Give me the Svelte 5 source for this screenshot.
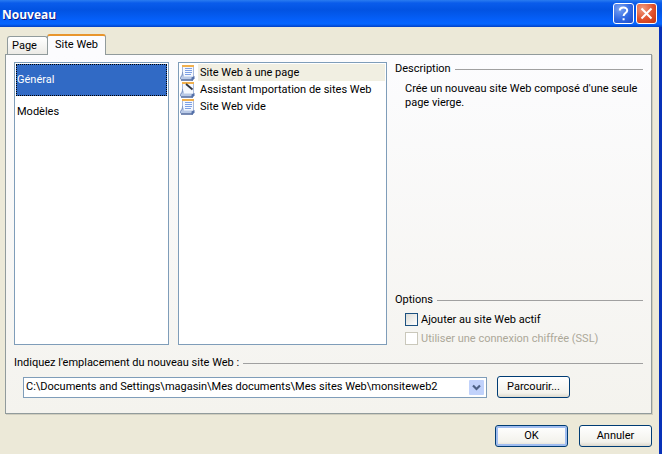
<script>
  const categories = ['Général', 'Modèles'];
  const templates = [
    { name: 'Site Web à une page', icon: 'page' },
    { name: 'Assistant Importation de sites Web', icon: 'wizard' },
    { name: 'Site Web vide', icon: 'page' }
  ];
  const paths = ['C:\\Documents and Settings\\magasin\\Mes documents\\Mes sites Web\\monsiteweb2'];

  let category = $state('Général');
  let template = $state('Site Web à une page');
  let path = $state(paths[0]);
  let addToActive = $state(false);
</script>

<div class="window">
  <header>
    <h1>Nouveau</h1>
    <button type="button" class="caption help" aria-label="Aide">
      <svg viewBox="0 0 21 21" width="21" height="21">
        <path d="M6.8 7.6C6.8 3.6 14.2 3.6 14.2 7.4C14.2 10 10.6 10 10.6 13" />
        <path d="M10.6 15.2v2" />
      </svg>
    </button>
    <button type="button" class="caption close" aria-label="Fermer">
      <svg viewBox="0 0 21 21" width="21" height="21">
        <path d="M5.5 5.5l10 10M15.5 5.5l-10 10" />
      </svg>
    </button>
  </header>

  <main>
    <div class="tabs" role="tablist">
      <button type="button" role="tab" aria-selected="false">Page</button>
      <button type="button" role="tab" aria-selected="true" class="active">Site Web</button>
    </div>

    <section class="panel">
      <div class="columns">
        <div class="list categories" role="listbox" aria-label="Catégories">
          {#each categories as item}
            <button
              type="button"
              role="option"
              aria-selected={category === item}
              class:selected={category === item}
              onclick={() => (category = item)}
            >{item}</button>
          {/each}
        </div>

        <div class="list templates" role="listbox" aria-label="Sites Web">
          {#each templates as item}
            <button
              type="button"
              role="option"
              aria-selected={template === item.name}
              class:selected={template === item.name}
              onclick={() => (template = item.name)}
            >
              <svg viewBox="0 0 16 16" width="16" height="16" aria-hidden="true">
                <path d="M2.5 .5h11v12h-11z" fill="#f4f8ff" stroke="#a9b9da" />
                <path d="M2 1h12" stroke="#f0b04e" stroke-width="2" />
                <path d="M2.5 7L4 10v1.500h8l2 .5v2L12.500 15.500h-11L0 14v-1.500z" fill="#b9c9e6" />
                <path d="M2.500 7v3L.5 12.500v1.500" stroke="#8298c4" />
                <path d="M1 15h12" stroke="#5a6f9f" stroke-width="1.500" />
                <path d="M11.500 12.500l3-1.500v2.500l-2 2h-1z" fill="#536fa8" />
                {#if item.icon === 'page'}
                  <path d="M5 3.5h7M5 5.5h7M5 7.5h7M5 9.5h6" stroke="#7ea0e4" />
                {:else}
                  <path d="M6 2L12.500 7.500" stroke="#303541" stroke-width="1.800" />
                {/if}
              </svg>
              <span>{item.name}</span>
            </button>
          {/each}
        </div>

        <div class="details">
          <section>
            <h2>Description</h2>
            <p>Crée un nouveau site Web composé d'une seule page vierge.</p>
          </section>
          <section class="options">
            <h2>Options</h2>
            <label>
              <input type="checkbox" bind:checked={addToActive} />
              Ajouter au site Web actif
            </label>
            <label class="disabled">
              <input type="checkbox" disabled />
              Utiliser une connexion chiffrée (SSL)
            </label>
          </section>
        </div>
      </div>

      <h2><label for="location">Indiquez l'emplacement du nouveau site Web :</label></h2>
      <div class="location">
        <div class="combo">
          <select id="location" bind:value={path}>
            {#each paths as item}
              <option value={item}>{item}</option>
            {/each}
          </select>
          <svg viewBox="0 0 15 15" width="15" height="15" aria-hidden="true">
            <rect width="15" height="15" rx="1" fill="#c1d2fb" />
            <path d="M4 5.5l3.5 3.5L11 5.5" fill="none" stroke="#4d6185" stroke-width="2.2" />
          </svg>
        </div>
        <button type="button" class="push">Parcourir...</button>
      </div>
    </section>

    <footer>
      <button type="submit" class="push default">OK</button>
      <button type="button" class="push">Annuler</button>
    </footer>
  </main>
</div>

<style>
  :global(body) {
    margin: 0;
  }

  .window {
    display: flex;
    flex-direction: column;
    min-height: 100vh;
    box-sizing: border-box;
    border-right: 3px solid #0831b8;
    background: #ece9d8;
    color: #000;
    font: 11px/14px Tahoma, Roboto, sans-serif;
  }

  button, select {
    font: inherit;
    color: inherit;
  }

  header {
    display: flex;
    align-items: center;
    gap: 2px;
    height: 27px;
    margin-right: -3px;
    padding: 0 5px 0 2px;
    background: linear-gradient(#2a7cf0 0, #0a5ceb 3px, #0253e2 10px, #0560fa 20px, #0566ff 24px, #0240c4 27px);
  }

  h1 {
    flex: 1;
    margin: 0;
    padding-top: 2px;
    color: #fff;
    font: bold 12px/16px 'Trebuchet MS', 'Open Sans', sans-serif;
    text-shadow: 1px 1px #0a1883;
  }

  .caption {
    width: 21px;
    height: 21px;
    padding: 0;
    border: 1px solid #fff;
    border-radius: 3px;
    overflow: hidden;
  }

  .caption svg {
    display: block;
    margin: -1px;
    fill: none;
    stroke: #fff;
    stroke-width: 2;
  }

  .help {
    background: radial-gradient(circle at 30% 25%, #7ba3f2, #3068e2 55%, #1e4bc8);
  }

  .close {
    background: radial-gradient(circle at 30% 25%, #f09c80, #e0512c 55%, #c23510);
  }

  main {
    flex: 1;
    display: flex;
    flex-direction: column;
    padding: 7px 7px 7px 5px;
  }

  .tabs {
    display: flex;
    align-items: flex-end;
    padding-left: 2px;
  }

  .tabs button {
    min-width: 41px;
    height: 18px;
    padding: 0 10px 0 4px;
    border: 1px solid #919b9c;
    border-bottom: 0;
    border-radius: 3px 3px 0 0;
    background: linear-gradient(#fff, #ecebe6);
  }

  .tabs .active {
    min-width: 59px;
    height: 21px;
    margin: 0 0 -1px -1px;
    padding: 0 6px 1px;
    border-top: 2px solid #e8952c;
    background: #fcfcfe;
    z-index: 1;
  }

  .panel {
    flex: 1;
    display: flex;
    flex-direction: column;
    padding: 7px 8px 15px;
    border: 1px solid #919b9c;
    box-shadow: 1px 1px #d0cebf;
    background: linear-gradient(#fcfcfe, #f4f3ee);
  }

  .columns {
    flex: 1;
    display: flex;
    margin-bottom: 11px;
  }

  .list {
    box-sizing: border-box;
    padding: 1px;
    border: 1px solid #7f9db9;
    background: #fff;
  }

  .list button {
    display: flex;
    align-items: center;
    width: 100%;
    padding: 0;
    border: 0;
    background: none;
    text-align: left;
  }

  .categories {
    flex: 151;
    margin-right: 9px;
  }

  .categories button {
    height: 32px;
    padding-left: 1px;
  }

  .categories .selected {
    background: #316ac5;
    color: #fff;
    outline: 1px dotted #000;
    outline-offset: -1px;
  }

  .templates {
    flex: 205;
    margin-right: 8px;
  }

  .templates button {
    height: 17px;
    gap: 2px;
  }

  .templates svg {
    flex: none;
    fill: none;
  }

  .templates span {
    flex: 1;
    padding: 2px 0 1px 2px;
    white-space: nowrap;
  }

  .templates .selected span {
    background: #f1efe2;
  }

  .details {
    flex: 248;
    display: flex;
    flex-direction: column;
    justify-content: space-between;
  }

  h2 {
    display: flex;
    align-items: center;
    gap: 4px;
    margin: 0;
    font: inherit;
  }

  h2::after {
    content: '';
    flex: 1;
    border-top: 1px solid #a0a0a0;
  }

  p {
    margin: 6px 0 0 10px;
  }

  .options label {
    display: flex;
    align-items: center;
    gap: 3px;
    height: 13px;
    margin: 6px 0 0 10px;
  }

  .options h2 {
    margin-bottom: 6px;
  }

  input {
    appearance: none;
    width: 13px;
    height: 13px;
    margin: 0;
    border: 1px solid #1c5180;
    background: linear-gradient(135deg, #dcdcd7, #fff);
  }

  input:checked {
    background: #21a121;
  }

  input:disabled {
    border-color: #cac8bb;
    background: #fff;
  }

  .disabled {
    color: #aca899;
  }

  .location {
    display: flex;
    gap: 10px;
    margin: 6px 73px 0 9px;
  }

  .combo {
    flex: 1;
    display: grid;
    align-items: center;
  }

  .combo > * {
    grid-area: 1 / 1;
  }

  .combo svg {
    justify-self: end;
    margin-right: 3px;
    pointer-events: none;
  }

  select {
    appearance: none;
    width: 100%;
    height: 21px;
    padding: 0 20px 0 2px;
    border: 1px solid #7f9db9;
    border-radius: 0;
    background: #fff;
  }

  .push {
    width: 73px;
    height: 22px;
    padding: 0;
    border: 1px solid #003c74;
    border-radius: 3px;
    background: linear-gradient(#fff, #f3f2ec 80%, #dcd8cc);
  }

  .default {
    box-shadow: inset 0 0 0 2px #a0bdf0;
  }

  footer {
    display: flex;
    justify-content: flex-end;
    gap: 11px;
    margin-top: 11px;
  }
</style>
